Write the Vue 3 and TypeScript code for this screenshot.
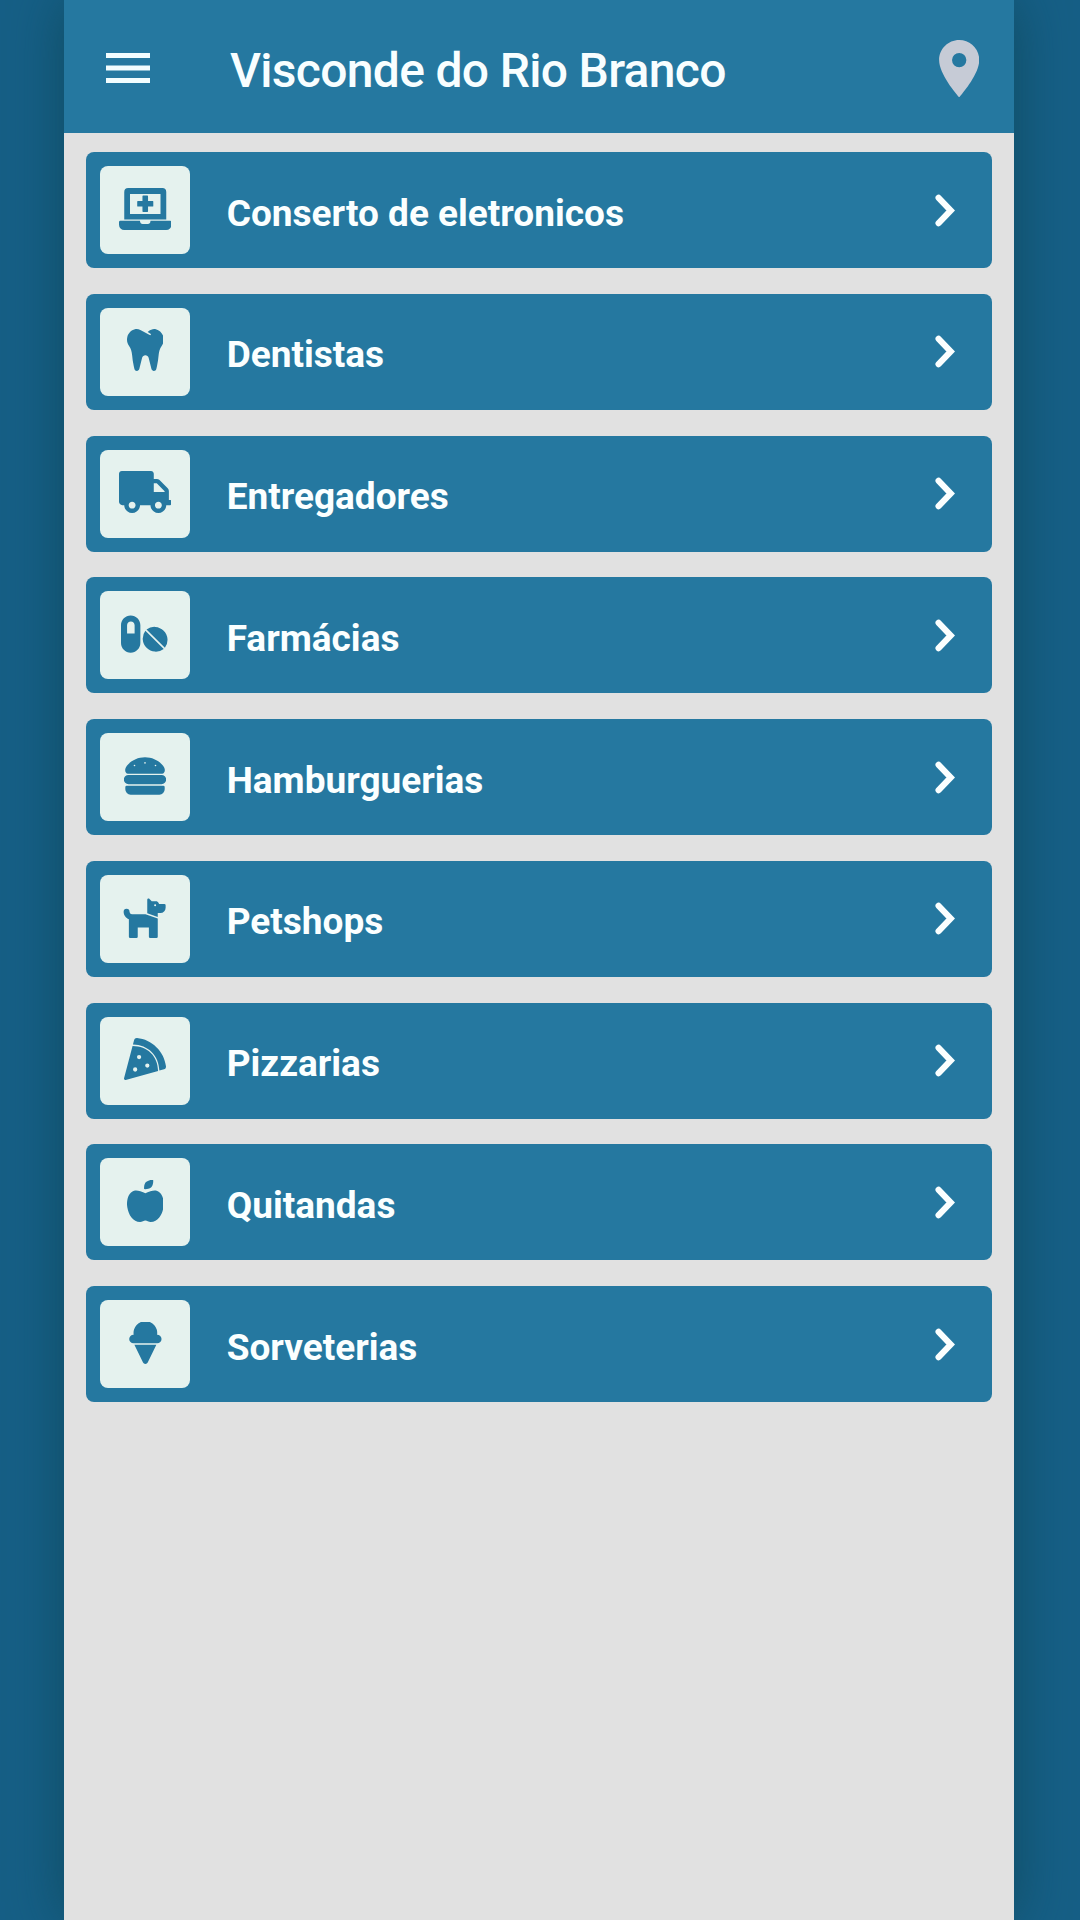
<script setup lang="ts">
interface Category {
  label: string
  width: number
  path: string
}

const categories: Category[] = [
  {
    label: 'Conserto de eletronicos',
    width: 640,
    path: 'M230 226h56v58a8 8 0 0 0 8 8h52a8 8 0 0 0 8-8v-58h56a8 8 0 0 0 8-8v-52a8 8 0 0 0-8-8h-56v-58a8 8 0 0 0-8-8h-52a8 8 0 0 0-8 8v58h-56a8 8 0 0 0-8 8v52a8 8 0 0 0 8 8zM576 48a48.14 48.14 0 0 0-48-48H112a48.14 48.14 0 0 0-48 48v336h512zm-70 268H134V72h372zm118 84H384c-.7 26-14 40-32 40H288c-18 0-32-16-32.8-40H16a16 16 0 0 0-16 16v32a64.19 64.19 0 0 0 64 64h512a64.19 64.19 0 0 0 64-64v-32a16 16 0 0 0-16-16z',
  },
  {
    label: 'Dentistas',
    width: 448,
    path: 'M443.98 96.25c-11.01-45.22-47.11-82.06-92.01-93.72-32.19-8.36-63 5.1-89.14 24.33-3.25 2.39-6.96 6-10.5 9l34 22c5 3.5 6 9 4 13s-8 5-13 3L162.83 12.84c-20.7-10.85-43.38-16.4-66.81-10.31-44.9 11.67-81 48.5-92.01 93.72-10.13 41.62-.42 80.81 21.5 110.43 23.36 31.57 32.68 68.66 36.29 107.35 4.4 47.16 10.33 94.16 20.94 140.32l7.8 33.95c3.19 13.87 15.49 23.7 29.67 23.7 13.97 0 26.15-9.55 29.54-23.16l34.47-138.42c4.56-18.32 20.96-31.16 39.76-31.16s35.2 12.85 39.76 31.16l34.47 138.42c3.39 13.61 15.57 23.16 29.54 23.16 14.18 0 26.48-9.83 29.67-23.7l7.8-33.95c10.61-46.15 16.53-93.16 20.94-140.32 3.61-38.7 12.93-75.78 36.29-107.35 21.95-29.61 31.66-68.8 21.53-110.43z',
  },
  {
    label: 'Entregadores',
    width: 640,
    path: 'M624 352h-16V243.9c0-12.7-5.1-24.9-14.1-33.9L494 110.1c-9-9-21.2-14.1-33.9-14.1H424V34c0-19-15-34-34-34H34C15 0 0 15 0 34v342c0 22 18 40 40 40h24c0 53 43 96 96 96s96-43 96-96h128c0 53 43 96 96 96s96-43 96-96h48c8.8 0 16-7.2 16-16v-32c0-8.8-7.2-16-16-16zM160 458c-23.2 0-42-18.8-42-42s18.8-42 42-42 42 18.8 42 42-18.8 42-42 42zm320 0c-23.2 0-42-18.8-42-42s18.8-42 42-42 42 18.8 42 42-18.8 42-42 42zm76-202H424V150h36l96 96z',
  },
  {
    label: 'Farmácias',
    width: 576,
    path: 'M118 30C53 30 0 83 0 148v218c0 65 53 118 118 118s118-53 118-118V148c0-65-53-118-118-118zM166 250H74V150c0-25 21-46 46-46s46 21 46 46zM297 215A160 160 0 0 0 521 439zM311 201A160 160 0 0 1 535 425z',
  },
  {
    label: 'Hamburguerias',
    width: 512,
    path: 'M458 244H54a55 55 0 0 0 0 112h404a55 55 0 0 0 0-112zm22 132H32a16 16 0 0 0-16 16v24a68 68 0 0 0 64 68h352a68 68 0 0 0 64-68v-24a16 16 0 0 0-16-16zM48 228h416c32 0 44-47.9 24.2-79.88C448 83.2 359.55 28 256 28c-103.54 0-192 55.2-232.18 120.11C4 180.09 16 228 48 228zM384 118a10 10 0 1 1-10 10 10 10 0 0 1 10-10zM256 86a10 10 0 1 1-10 10 10 10 0 0 1 10-10zm-128 32a10 10 0 1 1-10 10 10 10 0 0 1 10-10z',
  },
  {
    label: 'Petshops',
    width: 576,
    path: 'M298.06,222,448,275V496a16,16,0,0,1-16,16H356a16,16,0,0,1-16-16V384H204V496a16,16,0,0,1-16,16H112a16,16,0,0,1-16-16V282.09C58.84,268.84,32,233.66,32,192a36,36,0,0,1,72,0,30,30,0,0,0,28,30ZM544,112v32a64,64,0,0,1-64,64H448v49L320,211V48c0-14.25,17.22-21.39,27.31-11.31L374.59,64h53.63c10.91,0,23.75,7.92,28.62,17.69L464,96h64A16,16,0,0,1,544,112Zm-116,0a12,12,0,1,0-12,12A12,12,0,0,0,428,112Z',
  },
  {
    label: 'Pizzarias',
    width: 512,
    path: 'M158.87.15c-16.16-1.52-31.2 8.42-35.33 24.12l-14.81 56.27c187.62 5.49 314.54 130.61 322.48 317l56.94-15.78c15.72-4.36 25.49-19.68 23.62-35.9C490.89 165.08 340.78 17.32 158.87.15zM104.3 97.6L.55 491.64a16.21 16.21 0 0 0 20 19.75l395-109.6c-4.3-184-129-302-311.25-304.2zM136 410a26 26 0 1 1 26-26 26 26 0 0 1-26 26zm48-152a26 26 0 1 1 26-26 26 26 0 0 1-26 26zm100 104a26 26 0 1 1 26-26 26 26 0 0 1-26 26z',
  },
  {
    label: 'Quitandas',
    width: 448,
    path: 'M350.85 129c25.97 4.67 47.27 18.67 63.92 42 14.65 20.67 24.64 46.67 29.96 78 4.67 28.67 4.32 57.33-1 86-7.99 47.33-23.97 87-47.94 119-28.64 38.67-64.59 58-107.87 58-10.66 0-22.3-3.33-34.96-10-8.66-5.33-18.31-8-28.97-8s-20.3 2.67-28.97 8c-12.66 6.67-24.3 10-34.96 10-43.28 0-79.23-19.33-107.87-58-23.97-32-39.95-71.67-47.94-119-5.32-28.67-5.67-57.33-1-86 5.32-31.33 15.31-57.33 29.96-78 16.65-23.33 37.95-37.33 63.92-42 15.98-2.67 37.95-.33 65.92 7 23.97 6.67 44.28 14.67 60.93 24 16.65-9.33 36.96-17.33 60.93-24 27.98-7.33 49.96-9.67 65.94-7zm-54.94-41c-9.32 8.67-21.65 15-36.96 19-10.66 3.33-22.3 5-34.96 5l-14.98-1c-1.33-9.33-1.33-20 0-32 2.67-24 10.32-42.33 22.97-55 9.32-8.67 21.65-15 36.96-19 10.66-3.33 22.3-5 34.96-5l14.98 1 1 15c0 12.67-1.67 24.33-4.99 35-3.99 15.33-10.31 27.67-18.98 37z',
  },
  {
    label: 'Sorveterias',
    width: 448,
    path: 'M368 154h-.94a144.5 144.5 0 1 0-286.12 0H80a53 53 0 0 0 0 106h288a53 53 0 0 0 0-106zM195.38 493.69a31.52 31.52 0 0 0 57.24 0L358 276H90z',
  },
]
</script>

<template>
  <div class="page">
    <main class="panel">
      <header class="bar">
        <svg class="menu" viewBox="0 0 44 30" aria-hidden="true">
          <path d="M0 0h44v5H0zM0 12.4h44v5H0zM0 25h44v5H0z" />
        </svg>
        <h1 class="title">Visconde do Rio Branco</h1>
        <svg class="pin" viewBox="5 2 14 20" aria-hidden="true">
          <path d="M12 2C8.13 2 5 5.13 5 9c0 5.25 7 13 7 13s7-7.75 7-13c0-3.87-3.13-7-7-7zm0 9.5a2.5 2.5 0 0 1 0-5 2.5 2.5 0 0 1 0 5z" />
        </svg>
      </header>
      <ul class="list">
        <li v-for="c in categories" :key="c.label" class="card">
          <span class="tile">
            <svg class="glyph" :viewBox="`0 0 ${c.width} 512`" aria-hidden="true">
              <path :d="c.path" />
            </svg>
          </span>
          <span class="label">{{ c.label }}</span>
          <svg class="chevron" viewBox="0 0 20 33" aria-hidden="true">
            <path d="M3.6 3.8l12.2 12.7-12.2 12.7" />
          </svg>
        </li>
      </ul>
    </main>
  </div>
</template>

<style>
body {
  margin: 0;
  background: #165f86;
}
</style>

<style scoped>
.page {
  height: 1920px;
  overflow: hidden;
  background: #165f86;
  font-family: Roboto, "Liberation Sans", sans-serif;
}
.panel {
  width: 950.6px;
  height: 100%;
  margin-left: 63.7px;
  background: #e1e1e1;
  box-shadow: 0 0 52px rgba(14, 70, 84, 0.75);
}
.bar {
  display: flex;
  align-items: flex-start;
  height: 133px;
  box-sizing: border-box;
  padding: 0 35px 0 42.3px;
  background: #2578a0;
}
.menu {
  width: 44px;
  height: 30px;
  margin-top: 53px;
  fill: #f2fdff;
}
.title {
  flex: 1;
  margin: 43px 0 0 80px;
  font-size: 48px;
  line-height: 56px;
  font-weight: 500;
  letter-spacing: -0.68px;
  color: #f8feff;
  white-space: nowrap;
}
.pin {
  width: 40.4px;
  height: 57.4px;
  margin-top: 39.8px;
  fill: #c6cbd6;
}
.list {
  display: flex;
  flex-direction: column;
  gap: 25.75px;
  margin: 0;
  padding: 19px 22.6px 0;
  list-style: none;
}
.card {
  display: flex;
  align-items: center;
  height: 116px;
  box-sizing: border-box;
  padding: 0 36.8px 0 14px;
  border-radius: 8px;
  background: #2578a0;
}
.tile {
  display: flex;
  align-items: center;
  justify-content: center;
  width: 89.4px;
  height: 88px;
  box-sizing: border-box;
  padding-bottom: 3px;
  border-radius: 8px;
  background: #e5f2ee;
}
.glyph {
  display: block;
  height: 42px;
  fill: #2578a0;
}
.label {
  flex: 1;
  margin: 7px 0 0 37px;
  font-size: 37px;
  line-height: 44px;
  font-weight: 700;
  color: #fbffff;
}
.chevron {
  width: 20px;
  height: 33px;
  fill: none;
  stroke: #fbffff;
  stroke-width: 6.2;
  stroke-linecap: round;
  stroke-linejoin: miter;
}
</style>
